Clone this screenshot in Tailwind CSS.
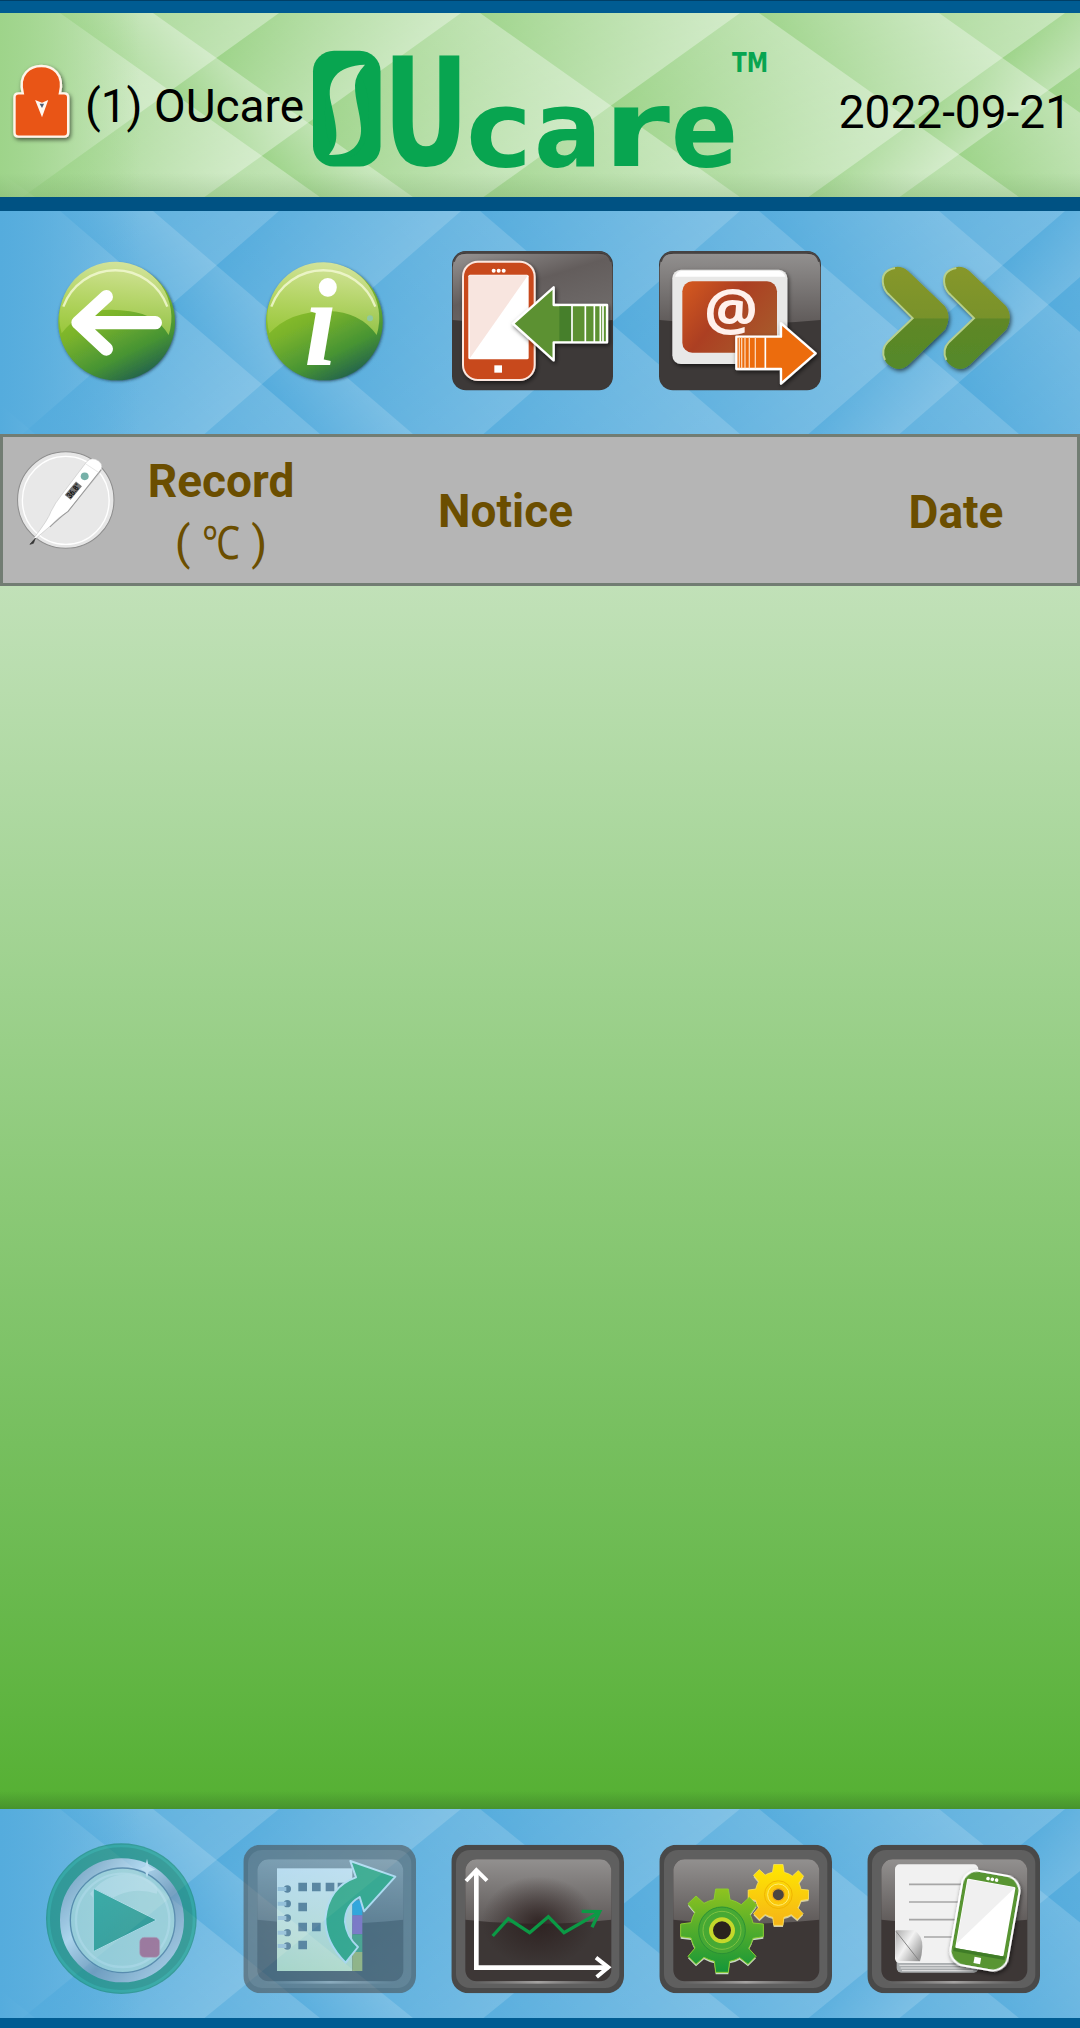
<!DOCTYPE html>
<html lang="en">
<head>
<meta charset="utf-8">
<title>OUcare</title>
<script src="https://cdn.jsdelivr.net/npm/@tailwindcss/browser@4"></script>
</head>
<body class="w-[1080px] h-[2028px] overflow-hidden font-['Roboto',sans-serif] text-black">
<!-- shared definitions -->
<svg class="absolute w-0 h-0">
  <defs>
    <linearGradient id="fade"><stop offset="0" stop-color="#fff" stop-opacity="0"/><stop offset="1" stop-color="#fff" stop-opacity=".34"/></linearGradient>
    <linearGradient id="fadeb"><stop offset="0" stop-color="#fff" stop-opacity="0"/><stop offset="1" stop-color="#fff" stop-opacity=".15"/></linearGradient>
    <linearGradient id="edgeG"><stop offset="0" stop-color="#9ed48a"/><stop offset="1" stop-color="#9ed48a" stop-opacity="0"/></linearGradient>
    <linearGradient id="edgeB"><stop offset="0" stop-color="#55acdd"/><stop offset="1" stop-color="#55acdd" stop-opacity="0"/></linearGradient>
    <symbol id="weave" viewBox="0 0 1080 190" preserveAspectRatio="none">
      <g transform="matrix(1 0 1.368 1 0 0)">
        <rect x="-400" width="175" height="190"/><rect x="-225" width="285" height="190"/><rect x="60" width="93" height="190"/><rect x="153" width="327" height="190"/><rect x="480" width="279" height="190"/><rect x="759" width="180" height="190"/><rect x="939" width="300" height="190"/>
      </g>
      <g transform="matrix(1 0 -1.35 1 0 0)">
        <rect x="0" width="279" height="190"/><rect x="279" width="182" height="190"/><rect x="461" width="279" height="190"/><rect x="740" width="325" height="190"/><rect x="1065" width="91" height="190"/><rect x="1156" width="300" height="190"/>
      </g>
    </symbol>
    <linearGradient id="ball" x1=".25" y1="0" x2=".75" y2="1"><stop offset="0" stop-color="#a5d02c"/><stop offset=".45" stop-color="#7ab32c"/><stop offset=".75" stop-color="#479433"/><stop offset="1" stop-color="#1d5b50"/></linearGradient>
    <linearGradient id="gloss" x1=".5" y1="0" x2=".3" y2="1"><stop offset="0" stop-color="#d2e39a"/><stop offset="1" stop-color="#a3cd45" stop-opacity=".75"/></linearGradient>
    <linearGradient id="tileTop" x1="0" y1="0" x2="0" y2="1"><stop offset="0" stop-color="#92908f"/><stop offset="1" stop-color="#5f5a59"/></linearGradient>
    <linearGradient id="tileTopL" x1="0" y1="0" x2=".7" y2="1"><stop offset="0" stop-color="#969392"/><stop offset=".5" stop-color="#635d5c"/><stop offset="1" stop-color="#6f6b6a"/></linearGradient>
    <radialGradient id="glow" cx=".5" cy=".5" r=".5"><stop offset="0" stop-color="#2b1e1d" stop-opacity=".85"/><stop offset="1" stop-color="#2b1e1d" stop-opacity="0"/></radialGradient>
    <linearGradient id="shine"><stop offset="0" stop-color="#8d8b8a" stop-opacity="0"/><stop offset=".5" stop-color="#a4a2a1"/><stop offset="1" stop-color="#8d8b8a" stop-opacity="0"/></linearGradient>
    <filter id="sh" x="-20%" y="-20%" width="150%" height="150%"><feDropShadow dx="4" dy="6" stdDeviation="6" flood-color="#000" flood-opacity=".6"/></filter>
    <filter id="shb" x="-20%" y="-20%" width="150%" height="150%"><feDropShadow dx="2" dy="2" stdDeviation="4" flood-color="#1a3040" flood-opacity=".8"/></filter>
    <!-- framed tile, 518 x 446 -->
    <symbol id="frame" viewBox="0 0 518 446">
      <rect width="518" height="446" rx="52" fill="#494949"/>
      <rect x="14" y="16" width="490" height="414" rx="42" fill="#5f5f5f"/>
      <rect x="42" y="44" width="438" height="366" rx="34" fill="#3d3736"/>
      <path d="M42 225V78a34 34 0 0 1 34-34h370a34 34 0 0 1 34 34v147q-219 24-438 0z" fill="url(#tileTop)"/>
      <rect x="60" y="409" width="400" height="8" fill="url(#shine)"/>
    </symbol>
    <linearGradient id="gg" x1="0" y1="0" x2="0" y2="1"><stop offset="0" stop-color="#8fc31f"/><stop offset="1" stop-color="#149639"/></linearGradient>
    <linearGradient id="yg" x1="0" y1="0" x2="0" y2="1"><stop offset="0" stop-color="#ffe800"/><stop offset="1" stop-color="#f5b318"/></linearGradient>
    <path id="cog" d="M-19-124L19-124 24-92Q44-87 58-77L82-99 104-76 84-48Q90-36 93-22L124-19V19L93 24Q89 40 80 54L102 78 78 102 53 82Q40 90 23 93L19 126H-19L-23 93Q-40 89-54 81L-78 102-102 78-81 53Q-89 40-93 23L-124 19V-19L-93-23Q-89-40-81-54L-102-80-78-103-54-81Q-40-89-24-92z"/>
  </defs>
</svg>

<div class="flex flex-col w-full h-full">
  <div class="h-[13px] bg-[#005c92] border-t border-[#003f66]"></div>

  <!-- title bar -->
  <header class="relative h-[184px] flex items-start bg-[#9ed48a]">
    <svg class="absolute inset-0 w-full h-full"><use href="#weave" fill="url(#fade)"/><rect width="140" height="100%" fill="url(#edgeG)"/></svg>
    <svg class="relative ml-[10px] mt-[47px] w-[66px] h-[90px]" viewBox="29 180 191.7 270" preserveAspectRatio="none">
      <g filter="url(#sh)"><path d="M66 280C52 220 88 198 120 198s68 22 54 82h12q12 0 12 12v105q0 13-12 13H54q-12 0-12-13V292q0-12 12-12z" fill="#e95513" stroke="#fff4ea" stroke-width="7"/></g>
      <path d="M102 300L122 308 140 300 122 352z" fill="#fff8f0"/><path d="M115 311h13l-6 13z" fill="#4d5d76"/>
    </svg>
    <div class="relative ml-[9px] mt-[63px] w-[225px] text-[46px] leading-[60px] whitespace-nowrap">(1) OUcare</div>
    <svg class="relative mt-[27px] w-[464px] h-[134px] overflow-visible" viewBox="310 40 464 134" font-family="DejaVu Sans" font-weight="bold" fill="#08a550">
      <mask id="leaf"><rect x="300" y="40" width="100" height="150" fill="#fff"/><path d="M365 67C337 68 326 83 331 106C338 137 339 148 329 160C350 161 362 151 361 132C360 115 355 105 355 88Q355 78 365 67z" fill="#000"/></mask>
      <g transform="scale(1 .968)">
        <g mask="url(#leaf)"><rect x="313" y="52.500" width="67.500" height="119.500" rx="21"/><text x="322" y="160" font-size="120" textLength="50" lengthAdjust="spacingAndGlyphs">O</text></g>
        <text x="383" y="170" font-size="155" textLength="86" lengthAdjust="spacingAndGlyphs">U</text>
        <text y="171" font-size="110"><tspan x="466" textLength="66" lengthAdjust="spacingAndGlyphs">c</tspan><tspan x="534" textLength="68" lengthAdjust="spacingAndGlyphs">a</tspan><tspan x="603" textLength="67" lengthAdjust="spacingAndGlyphs">r</tspan><tspan x="671" textLength="67" lengthAdjust="spacingAndGlyphs">e</tspan></text>
        <text x="732" y="74" font-size="27" textLength="36" lengthAdjust="spacingAndGlyphs">TM</text>
      </g>
    </svg>
    <div class="relative ml-auto mt-[69px] mr-[9px] text-[46px] leading-[60px] whitespace-nowrap">2022-09-21</div>
    <div class="absolute inset-x-0 bottom-0 h-6 bg-linear-to-b from-transparent to-[#6a9a5a]/25"></div>
  </header>
  <div class="h-[14px] bg-[#005283]"></div>

  <!-- toolbar -->
  <nav class="relative h-[223px] flex pl-[13px] bg-[#55acdd]">
    <svg class="absolute inset-0 w-full h-full"><use href="#weave" fill="url(#fadeb)"/><rect width="140" height="100%" fill="url(#edgeB)"/></svg>
    <svg class="relative w-[208px] h-[223px]" viewBox="39 33 624 669">
      <circle cx="350" cy="366" r="175" fill="url(#ball)" filter="url(#shb)"/>
      <path d="M185 400A168 168 0 1 1 506 405Q470 345 390 334Q250 310 185 400z" fill="url(#gloss)"/>
      <path d="M190 320A166 166 0 0 1 502 320" fill="none" stroke="#f1f8d0" stroke-width="7" opacity=".85"/>
      <path d="M319 290L234 368 319 447M240 368H466" fill="none" stroke="#fff" stroke-width="40" stroke-linecap="round" stroke-linejoin="round"/>
    </svg>
    <svg class="relative w-[208px] h-[223px]" viewBox="663 33 624 669">
      <circle cx="973" cy="366" r="175" fill="url(#ball)" filter="url(#shb)"/>
      <path d="M808 400A168 168 0 1 1 1130 405Q1080 335 985 333Q870 333 808 400z" fill="url(#gloss)"/>
      <path d="M814 320A166 166 0 0 1 1126 320" fill="none" stroke="#f1f8d0" stroke-width="7" opacity=".85"/>
      <circle cx="1110" cy="355" r="9" fill="#8fc9a0"/>
      <text x="912" y="494" font-family="Liberation Serif" font-style="italic" font-weight="bold" font-size="374" textLength="100" lengthAdjust="spacingAndGlyphs" fill="#fff">i</text>
    </svg>
    <svg class="relative w-[208px] h-[223px]" viewBox="-3 33 624 669">
      <rect x="66" y="153" width="483" height="418" rx="42" fill="#3d3938"/>
      <path d="M68 360V203q0-42 42-42h395q42 0 42 42v157q-240 24-479 0z" fill="url(#tileTopL)"/>
      <path d="M72 185Q80 156 110 156H505Q535 156 543 185" fill="none" stroke="#4a4646" stroke-width="5"/>
      <g filter="url(#sh)"><rect x="99" y="185" width="215" height="355" rx="45" fill="#c8481d" stroke="#fbe7df" stroke-width="6"/></g>
      <rect x="115" y="224" width="181" height="254" rx="5" fill="#fff"/><path d="M117 226H294L120 474z" fill="#f8e5df"/>
      <g fill="#fff"><circle cx="191" cy="212" r="6"/><circle cx="206" cy="212" r="6"/><circle cx="221" cy="212" r="6"/><rect x="193" y="496" width="23" height="22"/></g>
      <g filter="url(#sh)"><path d="M249 371L371 262V315H531V427H371V481z" fill="#5c9130" stroke="#fff" stroke-width="7" stroke-linejoin="round"/></g>
      <rect x="388" y="319" width="36" height="104" fill="#467f2b"/>
      <path d="M426 317V426M466 317V426M493 317V426M511 317V426M519 317V426" stroke="#fff" stroke-width="5"/>
    </svg>
    <svg class="relative w-[208px] h-[223px]" viewBox="621 33 624 669">
      <defs><linearGradient id="scr" x1="0" y1="0" x2="1" y2=".6"><stop offset="0" stop-color="#d65a1f"/><stop offset=".5" stop-color="#ac3f22"/><stop offset="1" stop-color="#a8572a"/></linearGradient></defs>
      <rect x="687" y="153" width="486" height="418" rx="42" fill="#3d3938"/>
      <path d="M689 360V203q0-42 42-42h398q42 0 42 42v157q-240 24-482 0z" fill="url(#tileTop)"/>
      <path d="M693 185Q701 156 731 156H1129Q1159 156 1167 185" fill="none" stroke="#4a4646" stroke-width="5"/>
      <g filter="url(#sh)"><rect x="727" y="209" width="345" height="283" rx="26" fill="#e8e8e7"/><path d="M735 230Q740 213 755 213H1045Q1060 213 1066 230z" fill="#fff"/></g>
      <rect x="757" y="244" width="284" height="214" rx="30" fill="url(#scr)"/>
      <text x="822" y="391" font-family="Open Sans" font-weight="bold" font-size="173" textLength="162" lengthAdjust="spacingAndGlyphs" fill="#fff0ec">@</text>
      <g filter="url(#sh)"><path d="M1157 460L1053 370V410H919V507H1053V551z" fill="#ec6c10" stroke="#fff" stroke-width="7" stroke-linejoin="round"/></g>
      <path d="M1006 412V505" stroke="#fff" stroke-width="5"/><path d="M976 412V505M958 412V505M945 412V505M935 412V505M928 412V505" stroke="#fbd3b2" stroke-width="4"/>
    </svg>
    <svg class="relative w-[208px] h-[223px]" viewBox="75 33 624 669">
      <defs><linearGradient id="chev" x1="0" y1="0" x2="0" y2="1"><stop offset="0" stop-color="#87972a"/><stop offset=".5" stop-color="#78922c"/><stop offset=".51" stop-color="#5f8726"/><stop offset="1" stop-color="#54892a"/></linearGradient>
      <path id="cv" d="M202 282Q175 250 196 220Q228 185 264 213L374 318Q396 350 376 388L264 496Q235 520 203 492Q177 462 202 430L278 355z"/></defs>
      <g fill="url(#chev)" filter="url(#sh)"><use href="#cv"/><use href="#cv" x="184"/></g>
      <g fill="none" stroke="#b6cf8c" stroke-width="6"><path id="hl" d="M225 204Q180 212 190 256Q195 275 207 284L278 355 204 425Q180 450 195 480"/><use href="#hl" x="184"/></g>
    </svg>
  </nav>

  <!-- column headings -->
  <section class="relative h-[152px] flex border-[3px] border-[#727d73] bg-[#b5b5b5] text-[#6b4e00] text-[46px] font-bold">
    <svg class="ml-[8px] mt-[11px] w-[108px] h-[108px]" viewBox="32 55 313.600 324" preserveAspectRatio="none">
      <ellipse cx="191" cy="211" rx="140" ry="145" fill="#e6e6e6" stroke="#8e8e8e" stroke-width="3"/>
      <ellipse cx="191" cy="212" rx="126" ry="132" fill="#e8e8e8" stroke="#fff" stroke-width="4"/>
      <path d="M98 326Q140 270 148 246Q160 220 178 197L252 96Q266 80 287 94Q304 108 288 132L196 246Q170 262 145 290Q120 312 98 332z" fill="#fff" stroke="#bbb" stroke-width="1.500"/>
      <path d="M145 292Q175 262 198 245L294 120" fill="none" stroke="#999" stroke-width="3"/>
      <path d="M248 102L286 128" stroke="#ddd" stroke-width="2"/>
      <path d="M87 344L103 325 97 341z" fill="#333" stroke="#333" stroke-width="2"/>
      <circle cx="246" cy="140" r="11.500" fill="#76b0a8"/>
      <g transform="translate(213 183) rotate(-51)"><rect x="-26" y="-11" width="52" height="22" fill="#777"/><text x="-24" y="9" font-size="24" textLength="48" lengthAdjust="spacingAndGlyphs" font-weight="bold" fill="#111">36.8°</text></g>
    </svg>
    <div class="w-[204px] pt-[13px] text-center leading-[62px] whitespace-nowrap"><div>Record</div><div class="font-normal">( <svg class="w-[38px] h-[36px] inline-block align-baseline overflow-visible" viewBox="0 0 38 36"><text x="0" y="36" font-size="46" textLength="38" lengthAdjust="spacingAndGlyphs" fill="currentColor">℃</text></svg> )</div></div>
    <div class="w-[360px] pt-[43px] pl-[5px] text-center leading-[62px]">Notice</div>
    <div class="w-[360px] pt-[44px] pl-[162px] text-center leading-[62px] ml-[12px]">Date</div>
  </section>

  <!-- empty record list -->
  <main class="h-[1223px] bg-linear-to-b from-[#c1e1b8] via-[#8bc977] to-[#55b032] flex flex-col justify-end"><div class="h-[18px] bg-linear-to-b from-transparent to-[#47932e]"></div></main>

  <!-- bottom bar -->
  <footer class="relative h-[209px] flex pl-[13px] bg-[#55acdd]">
    <svg class="absolute inset-0 w-full h-full"><use href="#weave" fill="url(#fadeb)"/><rect width="140" height="100%" fill="url(#edgeB)"/></svg>
    <svg class="relative w-[208px] h-[209px] opacity-55" viewBox="39 56 624 627">
      <defs><linearGradient id="rg" x1="0" y1="0" x2="1" y2="1"><stop offset="0" stop-color="#7789a0"/><stop offset=".35" stop-color="#e6f0f8"/><stop offset=".6" stop-color="#7d8fa8"/><stop offset="1" stop-color="#dce8f2"/></linearGradient>
      <linearGradient id="pl" x1="0" y1="0" x2="1" y2="1"><stop offset="0" stop-color="#12a27a"/><stop offset="1" stop-color="#0a805c"/></linearGradient></defs>
      <circle cx="364" cy="385" r="226" fill="#0b8560"/><circle cx="364" cy="385" r="218" fill="none" stroke="#13a07a" stroke-width="8"/>
      <circle cx="366" cy="390" r="172" fill="#c5e6de" stroke="url(#rg)" stroke-width="28"/>
      <circle cx="368" cy="390" r="157" fill="#bfe3d5" stroke="#4d6d88" stroke-width="4"/>
      <circle cx="368" cy="390" r="140" fill="none" stroke="#e3f5ee" stroke-width="7" opacity=".7"/>
      <path d="M270 310Q340 220 450 270Q480 290 470 310Q380 280 300 350z" fill="#e8f7ee" opacity=".7"/>
      <path d="M280 294L470 389 280 484z" fill="url(#pl)" stroke="#d8f3e8" stroke-width="3"/>
      <rect x="419" y="441" width="60" height="60" rx="14" fill="#c34a6a" stroke="#d898a8" stroke-width="2"/>
      <path d="M441 205L446 228 466 238 446 244 441 262 436 244 420 235 436 228z" fill="#fff"/>
    </svg>
    <svg class="relative w-[208px] h-[209px] opacity-55" viewBox="663 56 624 627">
      <defs><linearGradient id="pg" x1="0" y1="0" x2="0" y2="1"><stop offset="0" stop-color="#fff"/><stop offset="1" stop-color="#e5f5bc"/></linearGradient></defs>
      <use href="#frame" x="730" y="163" width="518" height="446"/>
      <rect x="831" y="234" width="226" height="308" fill="url(#pg)"/>
      <path d="M1057 330h30v45h-30z" fill="#0fa0dc"/><path d="M1057 375h30v57h-30z" fill="#9550b5"/><path d="M1057 432h30v53h-30z" fill="#3c9c58"/><path d="M1057 485h30v57h-30z" fill="#b9b944"/>
      <g fill="#4d6070"><path d="M895 277h26v26h-26zM936 277h26v26h-26zM977 277h26v26h-26zM1013 277h26v26h-26zM895 337h26v26h-26zM895 397h26v26h-26zM936 397h26v26h-26zM895 451h26v26h-26z"/>
      <circle cx="862" cy="296" r="11"/><circle cx="862" cy="340" r="11"/><circle cx="862" cy="383" r="11"/><circle cx="862" cy="427" r="11"/><circle cx="862" cy="467" r="11"/></g>
      <path d="M833 296h26M833 340h26M833 383h26M833 427h26M833 467h26" stroke="#b9cad6" stroke-width="12"/>
      <path d="M1037 517Q975 455 976 385Q985 290 1068 261L1051 212 1186 259 1092 363 1079 320Q1035 345 1035 395Q1040 440 1074 470z" fill="#19a456" stroke="#e8fbff" stroke-width="6" stroke-linejoin="round"/>
    </svg>
    <svg class="relative w-[208px] h-[209px]" viewBox="-3 56 624 627">
      <use href="#frame" x="64" y="163" width="518" height="446"/>
      <ellipse cx="325" cy="393" rx="170" ry="135" fill="url(#glow)"/>
      <g fill="none" stroke="#fff"><path d="M139 240V532H535" stroke-width="14"/><path d="M108 272L139 239 171 271M498 502L535 531 500 560" stroke-width="12"/></g>
      <path d="M188 437L235 385 299 427 355 379 402 427 508 366M455 363L509 364 486 411" fill="none" stroke="#0b9a45" stroke-width="10"/>
    </svg>
    <svg class="relative w-[208px] h-[209px]" viewBox="621 56 624 627">
      <use href="#frame" x="688" y="163" width="518" height="446"/>
      <g transform="translate(1045 313) scale(.73)"><use href="#cog" y="7" fill="#cfc9a8"/><use href="#cog" fill="url(#yg)" stroke="#ffe55a" stroke-width="3"/><circle r="57" fill="none" stroke="#f0b400" stroke-width="4"/><circle r="44" fill="#fbc90a" stroke="#ffef70" stroke-width="4"/><circle r="25" fill="#4b4540" stroke="#f3ad17" stroke-width="5"/></g>
      <g transform="translate(876 420)"><use href="#cog" y="6" fill="#c7d8c4"/><use href="#cog" fill="url(#gg)" stroke="#8bcb30" stroke-width="3"/><circle r="70" fill="#46a934" stroke="#2a9136" stroke-width="3"/><circle r="57" fill="none" stroke="#7fc241" stroke-width="3"/><circle r="33" fill="#2b221d" stroke="#c5d82b" stroke-width="12"/></g>
    </svg>
    <svg class="relative w-[208px] h-[209px]" viewBox="15 56 624 627">
      <defs><linearGradient id="curl" x1="0" y1="0" x2="1" y2=".7"><stop offset="0" stop-color="#aaa"/><stop offset=".5" stop-color="#f2f2f2"/><stop offset="1" stop-color="#9a9a9a"/></linearGradient></defs>
      <use href="#frame" x="82" y="163" width="518" height="446"/>
      <rect x="170" y="250" width="245" height="297" rx="14" fill="#a9adaf"/>
      <path d="M178 525H400M182 533H400M186 541H400" stroke="#e5e5e5" stroke-width="3"/>
      <rect x="165" y="222" width="250" height="296" rx="14" fill="#f1f1f1"/>
      <path d="M207 282H370M207 335H360M207 388H350M252 440H340" stroke="#a6a6a6" stroke-width="5"/>
      <path d="M167 420H222Q248 435 247 470Q246 495 240 513L180 512Q165 505 165 490z" fill="url(#curl)"/><path d="M168 423L238 512" stroke="#858585" stroke-width="3"/>
      <g transform="translate(435 391) rotate(10)"><g filter="url(#sh)"><rect x="-87" y="-144" width="174" height="288" rx="46" fill="#589532" stroke="#fff" stroke-width="6"/></g>
        <rect x="-74" y="-115" width="147" height="211" rx="4" fill="#fff"/><path d="M-72-113H71L-72 82z" fill="#f0f0f0"/><path d="M-78 101H78" stroke="#3f7c27" stroke-width="10"/>
        <g fill="#fff"><circle cx="-13" cy="-126" r="5.500"/><circle cx="0" cy="-126" r="5.500"/><circle cx="13" cy="-126" r="5.500"/><rect x="-12" y="112" width="20" height="19"/></g></g>
    </svg>
  </footer>
  <div class="h-[10px] bg-[#005c92]"></div>
</div>
</body>
</html>
